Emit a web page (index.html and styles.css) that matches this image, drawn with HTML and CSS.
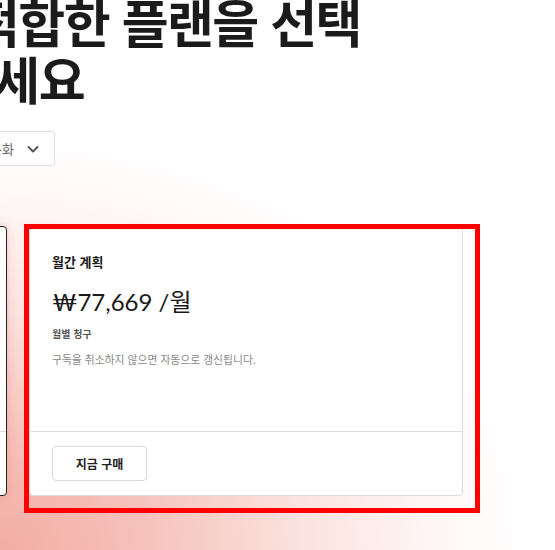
FILE: index.html
```html
<!DOCTYPE html>
<html lang="ko">
<head>
    <meta charset="UTF-8">
    <meta name="viewport" content="width=device-width, initial-scale=1.0">
    <title>플랜 선택</title>
    <link rel="stylesheet" href="styles.css">
</head>
<body>

    <div class="page">
        <h1 class="page-title">적합한 플랜을 선택<br>하세요</h1>

        <div class="currency-select">
            <span class="currency-label">모든 통화</span>
            <svg class="chevron" width="14" height="14" viewBox="0 0 14 14">
                <path d="M2.5 5 L7 9.5 L11.5 5" fill="none" stroke="#555" stroke-width="2" stroke-linecap="round" stroke-linejoin="round"/>
            </svg>
        </div>

        <div class="plans">
            <div class="plan-card plan-card-selected">
                <div class="plan-body">
                    <div class="plan-name">연간 계획</div>
                    <div class="plan-price">₩776,690 /년</div>
                    <div class="plan-billing">연간 청구</div>
                    <div class="plan-note">구독을 취소하지 않으면 자동으로 갱신됩니다.</div>
                </div>
                <div class="plan-footer">
                    <button class="buy-button">지금 구매</button>
                </div>
            </div>

            <div class="plan-card">
                <!-- highlight frame drawn over the card -->
                <div class="highlight"></div>
                <div class="plan-body">
                    <div class="plan-name">월간 계획</div>
                    <div class="plan-price">₩77,669 /월</div>
                    <div class="plan-billing">월별 청구</div>
                    <div class="plan-note">구독을 취소하지 않으면 자동으로 갱신됩니다.</div>
                </div>
                <div class="plan-footer">
                    <button class="buy-button">지금 구매</button>
                </div>
            </div>
        </div>
    </div>

</body>
</html>
```

FILE: styles.css
```css
/* Plan selection page */
html, body {
    margin: 0;
    height: 100%;
}

body {
    font-family: "Noto Sans CJK KR", "Noto Sans", sans-serif;
    color: #1a1a1a;
    overflow: hidden;
    background:
        radial-gradient(ellipse 120% 95% at 0% 100%, #f3aca3 0%, #f6c2bb 22%, #fbe2de 45%, #fef6f5 65%, #ffffff 80%);
}

.page-title {
    margin: -7px 0 0 -52px;
    text-indent: 25px;
    font-size: 51px;
    line-height: 57px;
    font-weight: 700;
    letter-spacing: -1.6px;
    color: #1b1b1b;
}

.currency-select {
    display: flex;
    align-items: center;
    justify-content: flex-end;
    gap: 12px;
    width: 110px;
    height: 35px;
    box-sizing: border-box;
    margin: 24px 0 0 -55px;
    padding: 0 14px 0 12px;
    border: 1px solid #dedede;
    border-radius: 4px;
    background-color: #fff;
}

.currency-label {
    font-size: 13px;
    color: #666;
}

.chevron {
    display: block;
}

.plans {
    display: flex;
    gap: 22px;
    margin: 60px 0 0 -427px;
}

.plan-card {
    position: relative;
    width: 434px;
    height: 270px;
    box-sizing: border-box;
    display: flex;
    flex-direction: column;
    border: 1px solid #dcdcdc;
    border-radius: 4px;
    background-color: #fff;
}

.plan-card-selected {
    border-color: #222;
    box-shadow: 0 0 10px rgba(225, 110, 100, 0.35);
}

.plan-body {
    flex: 1;
    padding: 26px 22px 0;
    border-bottom: 1px solid #dcdcdc;
}

.plan-name {
    font-size: 13px;
    font-weight: 700;
    line-height: 18px;
    color: #1a1a1a;
}

.plan-price {
    margin-top: 14px;
    font-family: Lato, "Noto Sans CJK KR", sans-serif;
    font-size: 24px;
    font-weight: 400;
    line-height: 34px;
    color: #1a1a1a;
}

.plan-billing {
    margin-top: 8px;
    font-size: 10px;
    font-weight: 700;
    line-height: 14px;
    color: #555;
}

.plan-note {
    margin-top: 11px;
    font-size: 10.8px;
    line-height: 14px;
    color: #888;
}

.plan-footer {
    padding: 14px 22px 14px;
}

.buy-button {
    width: 95px;
    height: 35px;
    border: 1px solid #d9d9d9;
    border-radius: 4px;
    background-color: #fff;
    font-family: "Noto Sans CJK KR", sans-serif;
    font-size: 12px;
    font-weight: 700;
    color: #222;
    cursor: pointer;
}

.highlight {
    position: absolute;
    left: -6px;
    top: -3px;
    width: 456px;
    height: 289px;
    box-sizing: border-box;
    border: 5px solid #ff0000;
    pointer-events: none;
    z-index: 2;
}
```
